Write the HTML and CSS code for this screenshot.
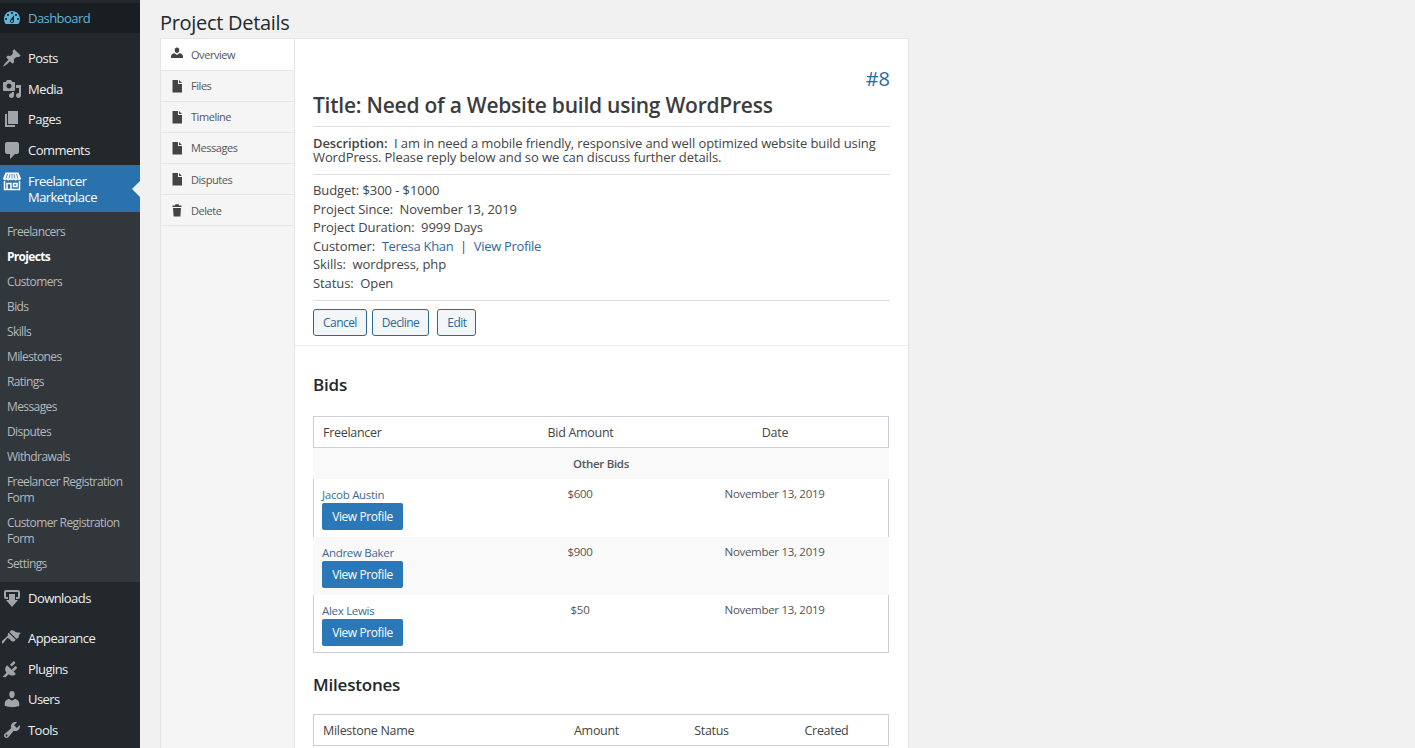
FILE: index.html
```html
<!DOCTYPE html>
<html lang="en">
<head>
<meta charset="utf-8">
<title>Project Details</title>
<link rel="stylesheet" href="styles.css">
</head>
<body>
<div class="page">
  <nav class="sidebar">
    <a class="menu-item dash"><svg class="mi" viewBox="0 0 20 20"><path d="M3.760 16h12.480c1.100-1.370 1.760-3.100 1.760-5 0-4.420-3.580-8-8-8s-8 3.580-8 8c0 1.900.660 3.630 1.760 5zM10 4c.550 0 1 .450 1 1s-.450 1-1 1-1-.450-1-1 .450-1 1-1zM6 6c.550 0 1 .450 1 1s-.450 1-1 1-1-.450-1-1 .450-1 1-1zm8 0c.550 0 1 .450 1 1s-.450 1-1 1-1-.450-1-1 .450-1 1-1zm-5.370 5.550L12 7v6c0 1.100-.900 2-2 2s-2-.900-2-2c0-.570.240-1.080.630-1.450zM4 10c.550 0 1 .450 1 1s-.450 1-1 1-1-.450-1-1 .450-1 1-1zm12 0c.550 0 1 .450 1 1s-.450 1-1 1-1-.450-1-1 .450-1 1-1zm-5 3c0-.550-.450-1-1-1s-1 .450-1 1 .450 1 1 1 1-.450 1-1z"/></svg><span>Dashboard</span></a>
    <div class="group">
      <a class="menu-item"><svg class="mi" viewBox="0 0 20 20"><path d="M10.440 3.020l1.820-1.820 6.360 6.350-1.830 1.820c-1.050-.680-2.480-.570-3.410.360l-.750.750c-.920.930-1.040 2.350-.350 3.410l-1.830 1.820-2.410-2.410-2.800 2.790c-.420.420-3.380 2.710-3.800 2.290s1.860-3.390 2.280-3.810l2.790-2.790L4.100 9.360l1.830-1.820c1.050.690 2.480.570 3.400-.360l.750-.750c.930-.920 1.050-2.350.360-3.410z"/></svg><span>Posts</span></a>
      <a class="menu-item"><svg class="mi" viewBox="0 0 20 20"><path d="M13 11V4c0-.550-.450-1-1-1h-1.670L9 1H5L3.670 3H2c-.550 0-1 .450-1 1v7c0 .550.450 1 1 1h10c.550 0 1-.450 1-1zM7 4.500c1.380 0 2.500 1.120 2.500 2.500S8.380 9.500 7 9.500 4.500 8.380 4.500 7 5.620 4.500 7 4.500zM14 6h5v10.500c0 1.380-1.120 2.500-2.500 2.500S14 17.880 14 16.500s1.120-2.500 2.500-2.500c.170 0 .340.020.500.050V9h-3V6zm-4 8.050V13h2v3.500c0 1.380-1.120 2.500-2.500 2.500S7 17.880 7 16.500 8.120 14 9.500 14c.170 0 .340.020.500.050z"/></svg><span>Media</span></a>
      <a class="menu-item"><svg class="mi" viewBox="0 0 20 20"><path d="M6 15V2h10v13H6zm-1 1h8v2H3V5h2v11z"/></svg><span>Pages</span></a>
      <a class="menu-item"><svg class="mi" viewBox="0 0 20 20"><path d="M5 2h10c1.100 0 2 .900 2 2v8c0 1.100-.900 2-2 2h-2l-5 5v-5H5c-1.100 0-2-.900-2-2V4c0-1.100.900-2 2-2z"/></svg><span>Comments</span></a>
      <a class="menu-item current"><svg class="mi store" viewBox="0 0 20 20"><path class="awning" d="M3.500 1.500h13l2.500 6a2 2 0 0 1-3.600 1 2.400 2.400 0 0 1-3.700 0 2.400 2.400 0 0 1-3.400 0 2.400 2.400 0 0 1-3.700 0A2 2 0 0 1 1 7.500z"/><path class="stripes" d="M5.500 3 4 7.500M8 3l-1 4.500M10 3v4.500M12 3l1 4.500M14.500 3 16 7.500"/><path class="shop" d="M2.500 10v8.500h15V10M5 18.500V12.500h4v6M11.500 12.500h3.500v3h-3.500z"/></svg><span>Freelancer Marketplace</span></a>
    </div>
    <div class="submenu">
      <a>Freelancers</a>
      <a class="active">Projects</a>
      <a>Customers</a>
      <a>Bids</a>
      <a>Skills</a>
      <a>Milestones</a>
      <a>Ratings</a>
      <a>Messages</a>
      <a>Disputes</a>
      <a>Withdrawals</a>
      <a>Freelancer Registration Form</a>
      <a>Customer Registration Form</a>
      <a>Settings</a>
    </div>
    <a class="menu-item"><svg class="mi" viewBox="0 0 20 20"><path d="M4 2h12a2 2 0 0 1 2 2v5a2 2 0 0 1-2 2h-2V9h2V4H4v5h2v2H4a2 2 0 0 1-2-2V4a2 2 0 0 1 2-2zm3 4h6v6h3l-6 7-6-7h3z"/></svg><span>Downloads</span></a>
    <div class="group">
      <a class="menu-item"><svg class="mi" viewBox="0 0 20 20"><path d="M14.480 11.060 7.410 3.990l1.500-1.500c.500-.560 2.300-.470 3.590.820 1.280 1.290 2.980 1.100 4.600 1.300.500.100 1.400.400 1.900.900-2 0-1.300 1.500-2.700 2.700l1 .500c-1 1-2 2.100-3.300 2.300zM6.700 4.700l7.070 7.070-1.500 1.500c-.560.500-2.400.500-3.500-.800-.800-.800-1.100-2.100-3.500-2.400L1 15.500a1.400 1.400 0 0 1-1-2.400L6 7.500c-.300-2.100-.500-1.700.7-2.800z"/></svg><span>Appearance</span></a>
      <a class="menu-item"><svg class="mi" viewBox="0 0 20 20"><path d="M13.110 4.360 9.870 7.600 8 5.730l3.240-3.240c.350-.340 1.050-.200 1.560.320.520.510.660 1.210.310 1.550zm-8 1.770 8.730 8.730-.900.900c-1.900 1.400-4.500 1-6.300-.500l-3.100 3.100-3-.300 3.900-4.200c-1.400-2-1.800-4.400-.400-6.300zm9.840 3.060-3.240 3.240-1.870-1.870 3.240-3.240c.340-.350 1.040-.210 1.550.310.520.510.660 1.210.320 1.560z"/></svg><span>Plugins</span></a>
      <a class="menu-item"><svg class="mi" viewBox="0 0 20 20"><path d="M10 9.250c-2.270 0-2.730-3.440-2.730-3.440C7 4.020 7.820 2 9.970 2c2.160 0 2.980 2.020 2.710 3.810 0 0-.410 3.440-2.680 3.440zm0 2.570L12.720 10c2.390 0 4.520 2.330 4.520 4.530v2.490s-3.650 1.130-7.240 1.130c-3.650 0-7.240-1.130-7.240-1.130v-2.490c0-2.250 1.940-4.480 4.470-4.480z"/></svg><span>Users</span></a>
      <a class="menu-item"><svg class="mi" viewBox="0 0 20 20"><path d="M16.680 9.770c-1.340 1.340-3.300 1.670-4.950.990l-5.410 6.520c-.990.990-2.590.990-3.580 0s-.990-2.590 0-3.570l6.520-5.420c-.680-1.650-.350-3.610.990-4.950 1.280-1.280 3.120-1.620 4.720-1.060l-2.890 2.890 2.820 2.820 2.860-2.870c.530 1.580.180 3.390-1.080 4.650zM3.810 16.210c.400.390 1.030.390 1.420 0 .400-.400.400-1.030 0-1.430-.390-.390-1.020-.390-1.420 0-.390.400-.390 1.030 0 1.430z"/></svg><span>Tools</span></a>
    </div>
  </nav>
  <main class="main">
    <h1 class="page-title">Project Details</h1>
    <div class="panel">
      <ul class="tabs">
        <li class="tab selected"><svg class="ti" viewBox="0 0 14 14"><path d="M7 .5c1.700 0 2.500 1.400 2.300 3-.200 1.300-1 2.500-2.300 2.500S4.900 4.800 4.700 3.500C4.500 1.900 5.300.5 7 .5zM4.600 6.300 7 8l2.400-1.700c2 .300 3.600 1.400 3.600 3.200V11H1V9.500c0-1.800 1.600-2.900 3.600-3.200z"/></svg>Overview</li>
        <li class="tab"><svg class="ti" viewBox="0 0 14 14"><path d="M2.500 1H8v4h4v8.500H2.500zM9 1l3 3H9z"/></svg>Files</li>
        <li class="tab"><svg class="ti" viewBox="0 0 14 14"><path d="M2.500 1H8v4h4v8.500H2.500zM9 1l3 3H9z"/></svg>Timeline</li>
        <li class="tab"><svg class="ti" viewBox="0 0 14 14"><path d="M2.500 1H8v4h4v8.500H2.500zM9 1l3 3H9z"/></svg>Messages</li>
        <li class="tab"><svg class="ti" viewBox="0 0 14 14"><path d="M2.500 1H8v4h4v8.500H2.500zM9 1l3 3H9z"/></svg>Disputes</li>
        <li class="tab"><svg class="ti" viewBox="0 0 14 14"><path d="M2.500 2.500H5.200V1.200h3.600v1.300h2.700V4h-9zM3 5h8l-.600 8.500H3.600z"/></svg>Delete</li>
      </ul>
      <div class="content">
        <section class="summary">
          <div class="project-id">#8</div>
          <h2 class="project-title">Title: Need of a Website build using WordPress</h2>
          <p class="description"><strong>Description:</strong>&nbsp; I am in need a mobile friendly, responsive and well optimized website build using WordPress. Please reply below and so we can discuss further details.</p>
          <ul class="facts">
            <li>Budget: $300 - $1000</li>
            <li>Project Since:&nbsp; November 13, 2019</li>
            <li>Project Duration:&nbsp; 9999 Days</li>
            <li>Customer:&nbsp; <a>Teresa Khan</a>&nbsp; |&nbsp; <a>View Profile</a></li>
            <li>Skills:&nbsp; wordpress, php</li>
            <li>Status:&nbsp; Open</li>
          </ul>
          <div class="actions">
            <button class="outline">Cancel</button>
            <button class="outline">Decline</button>
            <button class="outline edit">Edit</button>
          </div>
        </section>
        <section class="lists">
          <h3 class="list-title">Bids</h3>
          <table class="grid bids">
            <colgroup><col class="b1"><col class="b2"><col class="b3"></colgroup>
            <thead><tr><th>Freelancer</th><th>Bid Amount</th><th>Date</th></tr></thead>
            <tbody>
              <tr class="striped group-row"><td colspan="3">Other Bids</td></tr>
              <tr><td><a>Jacob Austin</a><button class="solid">View Profile</button></td><td>$600</td><td>November 13, 2019</td></tr>
              <tr class="striped"><td><a>Andrew Baker</a><button class="solid">View Profile</button></td><td>$900</td><td>November 13, 2019</td></tr>
              <tr><td><a>Alex Lewis</a><button class="solid">View Profile</button></td><td>$50</td><td>November 13, 2019</td></tr>
            </tbody>
          </table>
          <h3 class="list-title second">Milestones</h3>
          <table class="grid miles">
            <colgroup><col class="m1"><col class="m2"><col class="m3"><col class="m4"></colgroup>
            <thead><tr><th>Milestone Name</th><th>Amount</th><th>Status</th><th>Created</th></tr></thead>
          </table>
        </section>
      </div>
    </div>
  </main>
</div>
</body>
</html>
```
FILE: styles.css
```css
* { box-sizing: border-box; }
html, body { margin: 0; height: 748px; overflow: hidden; }
body { background: #f1f1f1; font-family: "Open Sans", "Noto Sans", sans-serif; color: #444; }
a { color: #2d6a9f; text-decoration: none; }
ul { list-style: none; margin: 0; padding: 0; }
.page { display: flex; height: 748px; overflow: hidden; }

.sidebar { width: 140px; flex: none; background: #23282d; padding-top: 2.600px; height: 748px; overflow: hidden; }
.menu-item { display: flex; align-items: center; height: 30.600px; color: #eee; font-size: 13px; letter-spacing: -.55px; line-height: 16px; }
.menu-item .mi { width: 20px; height: 20px; margin: 0 6px 0 2px; fill: #a0a5aa; flex: none; }
.menu-item span { display: block; }
.dash { background: #191e23; color: #5fb6d9; margin-bottom: 9.800px; }
.menu-item.dash .mi { fill: #5fb6d9; }
.current { background: #2a72ae; color: #fff; height: 47px; position: relative; }
.menu-item.current .mi { width: 20px; height: 20px; margin-top: -15px; fill: none; }
.awning { fill: #fff; }
.stripes { fill: none; stroke: #2a72ae; stroke-width: .8; }
.shop { fill: none; stroke: #fff; stroke-width: 1.500; }
.current::after { content: ""; position: absolute; right: 0; top: 16px; border: 8px solid transparent; border-right-color: #f1f1f1; border-left: 0; }
.submenu { background: #32373c; padding: 8px 0 5px; }
.submenu a { display: block; padding: 4px 10px 5px 7px; color: #b4b9be; font-size: 12px; letter-spacing: -.6px; line-height: 16px; }
.submenu a.active { color: #fff; font-weight: 700; letter-spacing: -.7px; }
.submenu + .menu-item { margin-bottom: 9.800px; }

.main { flex: 1; padding: 10px 0 0 20px; min-width: 0; }
.page-title { margin: 0 0 2px; height: 26px; font-size: 20px; line-height: 26px; font-weight: 400; color: #23282d; letter-spacing: -.3px; }
.panel { display: flex; width: 749px; background: #f5f5f5; border: 1px solid #e5e5e5; border-bottom: 0; height: 800px; }
.tabs { width: 133px; flex: none; }
.tab { display: flex; align-items: center; height: 31.200px; padding-left: 9px; border-bottom: 1px solid #e5e5e5; font-size: 11px; letter-spacing: -.45px; color: #555; }
.tab.selected { background: #fff; height: 31.500px; }
.ti { width: 14px; height: 14px; margin-right: 7px; fill: #444; flex: none; }
.content { flex: 1; background: #fff; border-left: 1px solid #e5e5e5; min-width: 0; }
.summary { padding: 27px 18px 9px 18px; border-bottom: 1px solid #eee; }
.project-id { text-align: right; font-size: 20px; line-height: 26px; color: #2d6a9f; }
.project-title { margin: 0; padding-bottom: 8px; font-size: 21px; line-height: 26px; font-weight: 600; color: #3c3c3c; letter-spacing: -.24px; border-bottom: 1px solid #ddd; }
.description { margin: 0; padding: 9px 0 10px; font-size: 13px; line-height: 14px; color: #444; border-bottom: 1px solid #ddd; letter-spacing: -.1px; }
.description strong { font-weight: 600; }
.facts { padding: 6px 0 8px; font-size: 13px; line-height: 18.500px; letter-spacing: -.08px; border-bottom: 1px solid #ddd; }
.facts a { letter-spacing: -.3px; }
.actions { display: flex; gap: 5px; padding-top: 8px; }
.outline { height: 27px; padding: 0 9px; background: #f3f5f6; border: 1px solid #2a6a94; border-radius: 3px; font: 12px "Open Sans", "Noto Sans", sans-serif; letter-spacing: -.55px; color: #2a6a94; }
.outline.edit { margin-left: 3px; }
.lists { padding: 0 18px; }
.list-title { margin: 27px 0 19px; font-size: 17px; line-height: 24px; font-weight: 600; color: #23282d; letter-spacing: -.2px; }
.list-title.second { margin: 20px 0 17px; }
.grid { width: 576px; border-collapse: separate; border-spacing: 0; table-layout: fixed; font-size: 11.500px; color: #555; letter-spacing: -.3px; }
.grid th { height: 32px; font-size: 12.500px; font-weight: 400; color: #444; letter-spacing: -.3px; text-align: center; background: #fff; border-top: 1px solid #ccd0d4; border-bottom: 1px solid #ccd0d4; padding: 0 0 0 1px; }
.grid th:first-child { text-align: left; padding-left: 9px; border-left: 1px solid #ccd0d4; }
.grid th:last-child { border-right: 1px solid #ccd0d4; }
.b1 { width: 186px; } .b2 { width: 162px; } .b3 { width: 228px; }
.m1 { width: 221px; } .m2 { width: 124px; } .m3 { width: 106px; } .m4 { width: 125px; }
.grid td { height: 58px; vertical-align: top; padding: 7px 0 0; text-align: center; }
.grid td:first-child { text-align: left; padding: 8px 0 0 8px; }
.grid td a { display: block; line-height: 16px; color: #3d6a91; }
.grid tbody td:first-child { border-left: 1px solid #ccd0d4; }
.grid tbody td:last-child { border-right: 1px solid #ccd0d4; }
.grid tbody tr:last-child td { border-bottom: 1px solid #ccd0d4; height: 58px; }
.grid tbody tr.striped td { background: #f9f9f9; border-left-color: #f9f9f9; border-right-color: #f9f9f9; }
.grid tbody tr.group-row td { height: 31px; padding: 0; text-align: center; vertical-align: middle; font-weight: 600; color: #555; }
.solid { display: block; width: 81px; height: 27px; padding: 0; background: #2a78b8; border: 0; border-radius: 2px; font: 12px "Open Sans", "Noto Sans", sans-serif; letter-spacing: -.4px; color: #fff; }
```
